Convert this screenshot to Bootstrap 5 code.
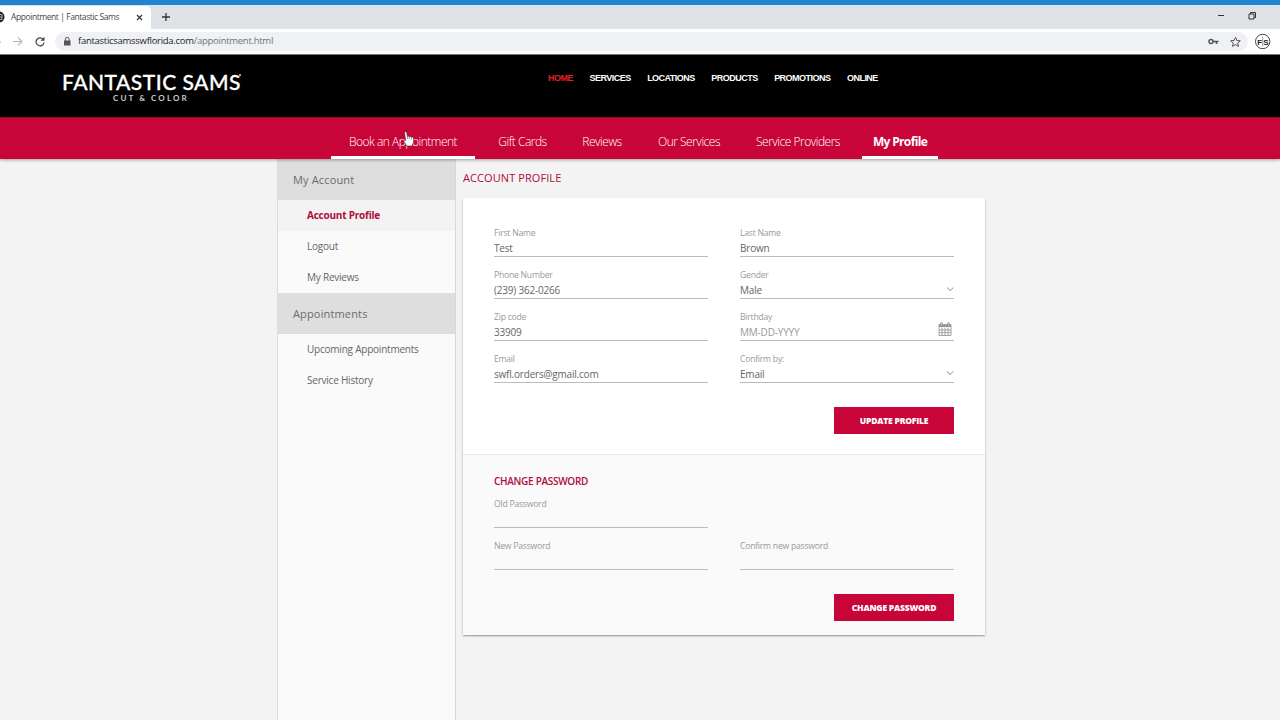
<!DOCTYPE html>
<html lang="en">
<head>
<meta charset="utf-8">
<title>Appointment | Fantastic Sams</title>
<link rel="stylesheet" href="https://cdn.jsdelivr.net/npm/bootstrap@5.3.0/dist/css/bootstrap.min.css">
<style>
:root{--sams-red:#c80538;--sams-dark:#b00c3c}
body{width:1280px;height:720px;overflow:hidden;background:#f3f3f3;font-family:"Open Sans",sans-serif;font-size:10px;color:#666;line-height:1.2}
svg{display:block;flex:none}
.accent-strip{height:5px;background:#2184d2}
.tab-strip{height:24px;background:#dee1e6}
.browser-tab{width:151px;height:23px;align-self:flex-end;background:#fff;border-top-right-radius:5px;font-size:8.5px;color:#45494d;padding-left:11px;position:relative}
.favicon{position:absolute;left:-7px;top:5px}
.toolbar{height:26px;background:#fff;border-bottom:1px solid #777}
.omnibox{width:1193px;height:19px;background:#f0f1f4;border-radius:10px;margin-left:7px;padding:0 7px 0 7px;font-size:9.5px}
.site-head{height:62px;background:#000}
.logo-block{width:182px;margin-left:62px;padding-top:14px;color:#fff;font-family:Lato,sans-serif}
.logo-name{font-size:21px;line-height:25px;letter-spacing:.5px;font-weight:500;white-space:nowrap;position:relative;-webkit-text-stroke:.3px #fff}
.logo-name i{position:absolute;right:3px;top:5px;width:2px;height:2px;border-radius:50%;background:#ddd}
.logo-sub{font-size:8px;line-height:8px;letter-spacing:2.1px;color:#ccc;padding-left:51px;font-weight:700;white-space:nowrap}
.top-links{margin-left:304px;padding-top:17px;gap:16.5px;font:bold 9px/12px "Liberation Sans",sans-serif;letter-spacing:-.52px}
.top-links a{color:#fff;text-decoration:none;white-space:nowrap}
.top-links a.current{color:#e3202c}
.section-nav{height:42px;background:var(--sams-red);border-top:1px solid #8d0a2c;box-shadow:0 1px 3px rgba(0,0,0,.35);position:relative;z-index:2;padding-left:331px}
.section-nav a{color:#fff;font-size:12px;line-height:16px;padding-top:16px;text-align:center;height:41px;text-decoration:none;white-space:nowrap;border-bottom:3px solid transparent;font-weight:300;letter-spacing:-.5px}
.section-nav a.marked{border-color:#fff}
.section-nav a.active{font-weight:700;letter-spacing:-.65px}
.w-book{width:144px}.w-gift{width:95px}.w-rev{width:64px}.w-our{width:110px}.w-prov{width:108px}.w-prof{width:76px;margin-left:10px}
.hand{position:absolute;left:403px;top:13px}
.side{width:179px;height:561px;margin-left:277px;background:#fafafa;border-left:1px solid #dcdcdc;border-right:1px solid #d8d8d8}
.side h2{height:41px;line-height:41px;font-size:11px;letter-spacing:.15px;font-weight:400;background:#dedede;padding-left:15px;margin:0;color:#6b6b6b}
.side a{display:block;height:31px;line-height:31px;padding-left:29px;color:#666;text-decoration:none;font-size:10px;letter-spacing:-.22px}
.side a.active{background:#f3f3f3;color:var(--sams-dark);font-weight:700}
.main-col{width:522px;margin-left:7px}
.main-col h1{font-size:11px;letter-spacing:.08px;line-height:16px;margin:11px 0 12px;font-weight:500;color:var(--sams-dark)}
.profile-box{height:437px;border:0;border-radius:1px;background:#fff;box-shadow:0 1px 2px rgba(0,0,0,.4)}
.upper{height:256px;padding:27px 31px 0}
.lower{height:181px;padding:18px 31px 0;background:#fafafa;border-top:1px solid #e9e9e9}
.fields{display:grid;grid-template-columns:214px 214px;column-gap:32px}
.field{height:42px;position:relative}
.field label{display:block;font-size:8.6px;line-height:12px;height:14px;padding-top:2px;color:#999;letter-spacing:-.22px}
.field .form-control{height:18px;padding:0;border:0;border-bottom:1px solid #bbb;border-radius:0;background:transparent;color:#666;font-size:10px;line-height:17px;letter-spacing:-.2px}
.field div.form-control{padding-top:.5px}
.field .form-control::placeholder{color:#999;opacity:1}
.field svg{position:absolute}
.chev{right:0;top:19px}.cal{right:2px;top:13px}
.lower h3{font-size:10px;letter-spacing:-.3px;line-height:16px;font-weight:600;color:var(--sams-dark);margin:0 0 7px}
.btn-row{padding-top:14px}
.btn-sams{width:120px;height:27px;padding:0;border:0;border-radius:0;background:var(--sams-red);color:#fff;font-size:8.5px;font-weight:800;letter-spacing:-.2px;line-height:27px}
.btn-sams:hover{background:var(--sams-red);color:#fff}
.t-app,.t-url{white-space:nowrap}
.t-app{letter-spacing:-.43px}.t-url{letter-spacing:-.28px;padding-bottom:1px;margin-left:6px}
</style>
</head>
<body>
<div class="accent-strip"></div>
<div class="tab-strip d-flex align-items-center">
  <div class="browser-tab d-flex align-items-center">
    <svg class="favicon" width="12" height="12" viewBox="0 0 12 12"><circle cx="6" cy="6" r="5.500" fill="#222"/><path d="M6 3.500h3M6 6h3M9 3.500v5H6" stroke="#ccc" stroke-width=".8" fill="none"/></svg>
    <span class="t-app">Appointment | Fantastic Sams</span>
    <svg class="ms-auto me-2" width="7" height="7" viewBox="0 0 7 7"><path d="M1 1l5 5M6 1L1 6" stroke="#333" stroke-width="1.200"/></svg>
  </div>
  <svg class="ms-2" width="14" height="12" viewBox="0 0 14 12"><path d="M7 2v8M3 6h8" stroke="#333" stroke-width="1.300"/></svg>
  <svg class="ms-auto" width="64" height="16" viewBox="0 0 64 16"><path d="M2 6.500h6" stroke="#333"/><path d="M33 5h5v5h-5zM34.500 5V3.500h5v5H38" fill="none" stroke="#333"/></svg>
</div>
<div class="toolbar d-flex align-items-center">
  <svg width="48" height="20" viewBox="0 0 48 20"><path d="M0 10h1" stroke="#aaa"/><path d="M13 9.500h9M18 5.700l4 3.800L18 13.300" fill="none" stroke="#b4b4b4" stroke-width="1.100"/><path d="M43 7.100A4 4 0 1 0 44 10.500" fill="none" stroke="#444" stroke-width="1.300"/><path d="M44.500 4.700v4h-4z" fill="#444"/></svg>
  <div class="omnibox d-flex align-items-center">
    <svg width="10" height="11" viewBox="0 0 10 11"><path d="M2 4.500h6.500V9.500H2z" fill="#555"/><path d="M3.400 5V3.200a1.850 1.850 0 0 1 3.700 0V5" fill="none" stroke="#555"/></svg>
    <span class="t-url"><span class="text-dark">fantasticsamsswflorida.com</span><span class="text-secondary">/appointment.html</span></span>
    <svg class="ms-auto" width="34" height="12" viewBox="0 0 34 12"><circle cx="4" cy="5.500" r="2" fill="none" stroke="#555" stroke-width="1.500"/><path d="M6 5.500h5.500M9.500 5.500v2.500" stroke="#555" stroke-width="1.600"/><path d="M28.500 1.300l1.400 3.200 3.400.3-2.600 2.200.8 3.400-3-1.800-3 1.800.8-3.400-2.600-2.200 3.400-.3z" fill="none" stroke="#555" stroke-width="1"/></svg>
  </div>
  <svg class="ms-1" width="20" height="18" viewBox="0 0 20 18"><circle cx="10.700" cy="8.500" r="7.200" fill="#fff" stroke="#444" stroke-width="1"/><path d="M10.700 3.500v10" stroke="#777" stroke-width=".7"/><text x="5.200" y="11.500" font-family="Liberation Sans" font-weight="700" font-size="8" fill="#222">F</text><text x="11.200" y="11.500" font-family="Liberation Sans" font-weight="700" font-size="8" fill="#222">S</text></svg>
</div>
<header class="site-head d-flex">
  <div class="logo-block"><div class="logo-name">FANTASTIC SAMS<i></i></div><div class="logo-sub">CUT &amp; COLOR</div></div>
  <nav class="top-links d-flex"><a class="current" href="#">HOME</a><a href="#">SERVICES</a><a href="#">LOCATIONS</a><a href="#">PRODUCTS</a><a href="#">PROMOTIONS</a><a href="#">ONLINE</a></nav>
</header>
<nav class="section-nav d-flex">
  <a class="w-book marked" href="#">Book an Appointment</a><a class="w-gift" href="#">Gift Cards</a><a class="w-rev" href="#">Reviews</a><a class="w-our" href="#">Our Services</a><a class="w-prov" href="#">Service Providers</a><a class="w-prof marked active" href="#">My Profile</a>
  <svg class="hand" width="12" height="16" viewBox="0 0 12 16"><path d="M1.500 1.500Q2.700 0 3.700 1.500L4.500 5.500Q5.500 4.700 6.300 5.700 7.500 5 8.200 6.200 10 5.500 10.500 7.200L10.500 11 9 15H4L.8 10.500Q.5 8.500 2.700 9.500z" fill="#fff" stroke="#333" stroke-width=".6"/><path d="M4.500 5.500v2.500M6.400 6v2M8.300 6.500v2" stroke="#555" stroke-width=".6"/></svg>
</nav>
<div class="d-flex">
  <aside class="side">
    <h2>My Account</h2><a class="active" href="#">Account Profile</a><a href="#">Logout</a><a href="#">My Reviews</a>
    <h2>Appointments</h2><a href="#">Upcoming Appointments</a><a href="#">Service History</a>
  </aside>
  <main class="main-col">
    <h1>ACCOUNT PROFILE</h1>
    <div class="card profile-box">
      <form class="upper">
        <div class="fields">
          <div class="field"><label>First Name</label><input class="form-control" value="Test"></div>
          <div class="field"><label>Last Name</label><input class="form-control" value="Brown"></div>
          <div class="field"><label>Phone Number</label><input class="form-control" value="(239) 362-0266"></div>
          <div class="field"><label>Gender</label><div class="form-control">Male</div><svg class="chev" width="8" height="6" viewBox="0 0 8 6"><path d="M1 1.500L4.200 4.500l3.200-3" fill="none" stroke="#888"/></svg></div>
          <div class="field"><label>Zip code</label><input class="form-control" value="33909"></div>
          <div class="field"><label>Birthday</label><input class="form-control" placeholder="MM-DD-YYYY"><svg class="cal" width="14" height="15" viewBox="0 0 14 15"><path d="M1 2.500h12v2.500H1z" fill="#999"/><path d="M1 2.500h12v11H1zM1 8h12M1 10.700h12M4 5.500v8M7 5.500v8M10 5.500v8" fill="none" stroke="#909090" stroke-width=".8"/><path d="M3.500 1.300v2.400M10.500 1.300v2.400" stroke="#888" stroke-width="2.200" stroke-linecap="round"/><path d="M3.500 1.200v2.600M10.500 1.200v2.600" stroke="#ddd" stroke-width=".8"/></svg></div>
          <div class="field"><label>Email</label><input class="form-control" value="swfl.orders@gmail.com"></div>
          <div class="field"><label>Confirm by:</label><div class="form-control">Email</div><svg class="chev" width="8" height="6" viewBox="0 0 8 6"><path d="M1 1.500L4.200 4.500l3.200-3" fill="none" stroke="#888"/></svg></div>
        </div>
        <div class="btn-row d-flex justify-content-end"><button type="button" class="btn btn-sams">UPDATE PROFILE</button></div>
      </form>
      <form class="lower">
        <h3>CHANGE PASSWORD</h3>
        <div class="fields">
          <div class="field"><label>Old Password</label><input class="form-control"></div><div></div>
          <div class="field"><label>New Password</label><input class="form-control"></div>
          <div class="field"><label>Confirm new password</label><input class="form-control"></div>
        </div>
        <div class="btn-row d-flex justify-content-end"><button type="button" class="btn btn-sams">CHANGE PASSWORD</button></div>
      </form>
    </div>
  </main>
</div>
<script src="https://cdn.jsdelivr.net/npm/bootstrap@5.3.0/dist/js/bootstrap.bundle.min.js"></script>
</body>
</html>
